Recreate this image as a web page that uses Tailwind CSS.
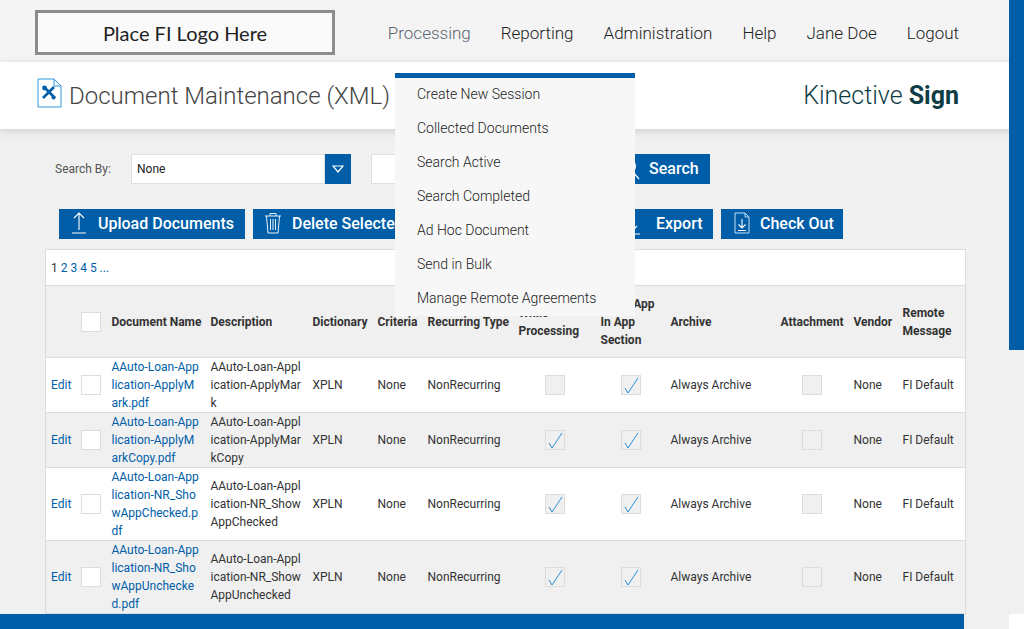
<!DOCTYPE html>
<html>
<head>
<meta charset="utf-8">
<script src="https://cdn.jsdelivr.net/npm/@tailwindcss/browser@4"></script>
</head>
<body class="bg-[#f0f0f0] font-['Roboto',sans-serif] text-[#333]">
<div class="relative h-[629px] w-[1024px] overflow-hidden flex flex-col">
  <!-- top header -->
  <header class="h-[62px] bg-[#f4f4f4] flex items-start pl-[35px] pr-[65px] shrink-0">
    <div class="mt-[10px] w-[300px] h-[45px] border-[3px] border-[#8c8c8c] bg-[#fafafa] flex items-center justify-center font-['Lato',sans-serif] text-[20px] text-[#222]">Place FI Logo Here</div>
    <nav class="ml-auto mt-[22px] flex gap-[30px] text-[17px] leading-[22px] font-light text-[#222]">
      <a class="text-[#5a6570]">Processing</a><a>Reporting</a><a>Administration</a><a>Help</a><a>Jane Doe</a><a>Logout</a>
    </nav>
  </header>
  <!-- title band -->
  <div class="h-[67px] bg-white shadow-[0_2px_8px_rgba(0,0,0,0.15)] flex items-center pl-[37px] pr-[65px] shrink-0 relative">
    <svg class="w-[25px] h-[30px] mb-[6px]" viewBox="0 0 25 30">
      <path d="M1 1H17L24 8V29H1Z M17 1V8H24" fill="#fff" stroke="#2f9ae0" stroke-width="1"/>
      <path d="M6 20L17 9M7 9L18 20" stroke="#005ea8" stroke-width="2.6" fill="none"/>
      <circle cx="7.5" cy="10" r="2.4" fill="#005ea8"/><circle cx="16.5" cy="19.5" r="2" fill="#005ea8"/>
    </svg>
    <h1 class="ml-[7px] text-[24px] font-light text-[#444]">Document Maintenance (XML)</h1>
    <div class="ml-auto text-[25px] font-light text-[#0f3d45]">Kinective <b class="font-bold">Sign</b></div>
  </div>
  <!-- main -->
  <main class="flex-1 min-h-0 overflow-hidden pl-[45px] pt-[25px]">
    <div class="flex items-center h-[30px] pl-[10px]">
      <label class="w-[76px] text-[12px] text-[#555]">Search By:</label>
      <div class="w-[194px] h-[30px] bg-white border border-[#e0e0e0] flex items-center pl-[5px] text-[12px] text-[#222]">None</div>
      <div class="w-[26px] h-[30px] bg-[#005ea8] flex items-center justify-center">
        <svg class="w-[12px] h-[8px]" viewBox="0 0 12 8"><path d="M1 1H11L6 7Z" fill="none" stroke="#fff" stroke-width="1.2"/></svg>
      </div>
      <div class="ml-[20px] w-[220px] h-[30px] bg-white border border-[#e0e0e0]"></div>
      <button class="ml-[9px] w-[110px] h-[30px] bg-[#005ea8] text-white text-[16px] font-medium flex items-center pl-[20px] gap-[4px]">
        <svg class="w-[22px] h-[24px] shrink-0" viewBox="0 0 22 24"><circle cx="9" cy="9" r="6.5" fill="none" stroke="#fff" stroke-width="1.2"/><path d="M13 15L19 22" stroke="#fff" stroke-width="1.2"/></svg>
        <span class="ml-[3px]">Search</span>
      </button>
    </div>
    <div class="flex gap-[8px] h-[30px] mt-[25px] pl-[14px] text-white text-[16px] font-medium">
      <button class="w-[186px] bg-[#005ea8] flex items-center pl-[12px]">
        <svg class="w-[16px] h-[22px] mb-[2px] shrink-0" viewBox="0 0 16 22"><path d="M8 1V18M3 6L8 1L13 6M1 21H15" fill="none" stroke="#fff" stroke-width="1.1"/></svg>
        <span class="ml-[11px]">Upload Documents</span>
      </button>
      <button class="w-[170px] bg-[#005ea8] flex items-center pl-[11px] whitespace-nowrap">
        <svg class="w-[18px] h-[22px] mb-[3px] shrink-0" viewBox="0 0 18 22"><path d="M1 4H17M6 4V1.5H12V4M2.5 4L4 21H14L15.5 4M6.5 7V18M9 7V18M11.5 7V18" fill="none" stroke="#e8f2fa" stroke-width="1"/></svg>
        <span class="ml-[10px]">Delete Selected</span>
      </button>
      <div class="w-[174px] bg-[#005ea8]"></div>
      <button class="w-[100px] bg-[#005ea8] flex items-center pl-[10px]">
        <svg class="w-[18px] h-[22px] shrink-0" viewBox="0 0 18 22"><path d="M9 3V18M4 13L9 18L14 13M1 21H17" fill="none" stroke="#fff" stroke-width="1.1"/></svg>
        <span class="ml-[15px]">Export</span>
      </button>
      <button class="w-[122px] bg-[#005ea8] flex items-center pl-[13px]">
        <svg class="w-[16px] h-[22px] mb-[3px] shrink-0" viewBox="0 0 16 22"><path d="M1 1H11L15 5V21H1Z M11 1V5H15" fill="none" stroke="#bfe0f7" stroke-width="1"/><path d="M8 7V16M4.5 12.5L8 16L11.5 12.5M4 18.5H12" fill="none" stroke="#fff" stroke-width="1.1"/></svg>
        <span class="ml-[10px]">Check Out</span>
      </button>
    </div>
    <!-- table -->
    <table class="mt-[10px] w-[920px] table-fixed border-collapse border border-[#ddd] text-[12px] leading-[18px] text-[#333]">
      <colgroup>
        <col class="w-[30px]"><col class="w-[31px]"><col class="w-[99px]"><col class="w-[102px]"><col class="w-[65px]"><col class="w-[50px]"><col class="w-[91px]"><col class="w-[82px]"><col class="w-[70px]"><col class="w-[110px]"><col class="w-[73px]"><col class="w-[49px]"><col class="w-[68px]">
      </colgroup>
      <thead>
        <tr class="h-[36px] bg-white border-b border-[#ddd]"><td colspan="13" class="pl-[5px] text-[#005ea8]"><span class="text-[#333]">1</span> 2 3 4 5 ...</td></tr>
        <tr class="h-[72px] bg-[#f0f0f0] border-b border-[#ddd] font-bold text-left [&>th]:pl-[5px] [&>th]:pr-0 [&>th]:font-bold">
          <th></th>
          <th><span class="block w-[20px] h-[20px] bg-white border border-[#ddd]"></span></th>
          <th>Document Name</th><th>Description</th><th>Dictionary</th><th>Criteria</th><th>Recurring Type</th>
          <th class="pr-[5px]">While Processing</th><th class="pr-[5px]">Show App In App Section</th><th>Archive</th><th>Attachment</th><th>Vendor</th><th>Remote Message</th>
        </tr>
      </thead>
      <tbody class="[&_td]:pl-[5px] [&_td]:pr-0">
        <tr class="h-[55px] bg-white border-b border-[#ddd]">
          <td class="text-[#005ea8]">Edit</td>
          <td><span class="block w-[20px] h-[20px] bg-white border border-[#ddd]"></span></td>
          <td class="text-[#005ea8] break-all pr-[5px]!">AAuto-Loan-Application-ApplyMark.pdf</td>
          <td class="break-all pr-[5px]!">AAuto-Loan-Application-ApplyMark</td>
          <td>XPLN</td><td>None</td><td>NonRecurring</td>
          <td><span class="ml-[26px] block w-[20px] h-[20px] bg-[#f0f0f0] border border-[#ddd]"></span></td>
          <td><span class="ml-[20px] block w-[20px] h-[20px] bg-[#f0f0f0] border border-[#ddd]"><svg class="w-[18px] h-[18px]" viewBox="0 0 18 18"><path d="M3 12L6 17L16 2" fill="none" stroke="#2a8fd8" stroke-width="1"/></svg></span></td>
          <td>Always Archive</td>
          <td><span class="ml-[21px] block w-[20px] h-[20px] bg-[#f0f0f0] border border-[#ddd]"></span></td>
          <td>None</td><td>FI Default</td>
        </tr>
        <tr class="h-[55px] bg-[#f0f0f0] border-b border-[#ddd]">
          <td class="text-[#005ea8]">Edit</td>
          <td><span class="block w-[20px] h-[20px] bg-white border border-[#ddd]"></span></td>
          <td class="text-[#005ea8] break-all pr-[5px]!">AAuto-Loan-Application-ApplyMarkCopy.pdf</td>
          <td class="break-all pr-[5px]!">AAuto-Loan-Application-ApplyMarkCopy</td>
          <td>XPLN</td><td>None</td><td>NonRecurring</td>
          <td><span class="ml-[26px] block w-[20px] h-[20px] bg-[#f0f0f0] border border-[#ddd]"><svg class="w-[18px] h-[18px]" viewBox="0 0 18 18"><path d="M3 12L6 17L16 2" fill="none" stroke="#2a8fd8" stroke-width="1"/></svg></span></td>
          <td><span class="ml-[20px] block w-[20px] h-[20px] bg-[#f0f0f0] border border-[#ddd]"><svg class="w-[18px] h-[18px]" viewBox="0 0 18 18"><path d="M3 12L6 17L16 2" fill="none" stroke="#2a8fd8" stroke-width="1"/></svg></span></td>
          <td>Always Archive</td>
          <td><span class="ml-[21px] block w-[20px] h-[20px] bg-[#f0f0f0] border border-[#ddd]"></span></td>
          <td>None</td><td>FI Default</td>
        </tr>
        <tr class="h-[73px] bg-white border-b border-[#ddd]">
          <td class="text-[#005ea8]">Edit</td>
          <td><span class="block w-[20px] h-[20px] bg-white border border-[#ddd]"></span></td>
          <td class="text-[#005ea8] break-all pr-[5px]!">AAuto-Loan-Application-NR_ShowAppChecked.pdf</td>
          <td class="break-all pr-[5px]!">AAuto-Loan-Application-NR_ShowAppChecked</td>
          <td>XPLN</td><td>None</td><td>NonRecurring</td>
          <td><span class="ml-[26px] block w-[20px] h-[20px] bg-[#f0f0f0] border border-[#ddd]"><svg class="w-[18px] h-[18px]" viewBox="0 0 18 18"><path d="M3 12L6 17L16 2" fill="none" stroke="#2a8fd8" stroke-width="1"/></svg></span></td>
          <td><span class="ml-[20px] block w-[20px] h-[20px] bg-[#f0f0f0] border border-[#ddd]"><svg class="w-[18px] h-[18px]" viewBox="0 0 18 18"><path d="M3 12L6 17L16 2" fill="none" stroke="#2a8fd8" stroke-width="1"/></svg></span></td>
          <td>Always Archive</td>
          <td><span class="ml-[21px] block w-[20px] h-[20px] bg-[#f0f0f0] border border-[#ddd]"></span></td>
          <td>None</td><td>FI Default</td>
        </tr>
        <tr class="h-[73px] bg-[#f0f0f0] border-b border-[#ddd]">
          <td class="text-[#005ea8]">Edit</td>
          <td><span class="block w-[20px] h-[20px] bg-white border border-[#ddd]"></span></td>
          <td class="text-[#005ea8] break-all pr-[5px]!">AAuto-Loan-Application-NR_ShowAppUnchecked.pdf</td>
          <td class="break-all pr-[5px]!">AAuto-Loan-Application-NR_ShowAppUnchecked</td>
          <td>XPLN</td><td>None</td><td>NonRecurring</td>
          <td><span class="ml-[26px] block w-[20px] h-[20px] bg-[#f0f0f0] border border-[#ddd]"><svg class="w-[18px] h-[18px]" viewBox="0 0 18 18"><path d="M3 12L6 17L16 2" fill="none" stroke="#2a8fd8" stroke-width="1"/></svg></span></td>
          <td><span class="ml-[20px] block w-[20px] h-[20px] bg-[#f0f0f0] border border-[#ddd]"><svg class="w-[18px] h-[18px]" viewBox="0 0 18 18"><path d="M3 12L6 17L16 2" fill="none" stroke="#2a8fd8" stroke-width="1"/></svg></span></td>
          <td>Always Archive</td>
          <td><span class="ml-[21px] block w-[20px] h-[20px] bg-[#f0f0f0] border border-[#ddd]"></span></td>
          <td>None</td><td>FI Default</td>
        </tr>
      </tbody>
    </table>
  </main>
  <!-- footer -->
  <div class="h-[15px] shrink-0 flex">
    <div class="w-[964px] bg-[#005ea8]"></div>
    <div class="ml-auto w-[15px] bg-white"></div>
  </div>
  <!-- overlays -->
  <div class="absolute right-0 top-0 w-[15px] h-[350px] bg-[#005ea8]"></div>
  <div class="absolute left-[395px] top-[73px] w-[240px] h-[243px] bg-[#f7f7f7] border-t-[5px] border-[#005ea8] text-[14px] font-light text-[#222] [&>div]:h-[34px] [&>div]:flex [&>div]:items-center [&>div]:pl-[22px] [&>div]:relative [&>div]:-top-px">
    <div>Create New Session</div><div>Collected Documents</div><div>Search Active</div><div>Search Completed</div><div>Ad Hoc Document</div><div>Send in Bulk</div><div>Manage Remote Agreements</div>
  </div>
</div>
</body>
</html>
